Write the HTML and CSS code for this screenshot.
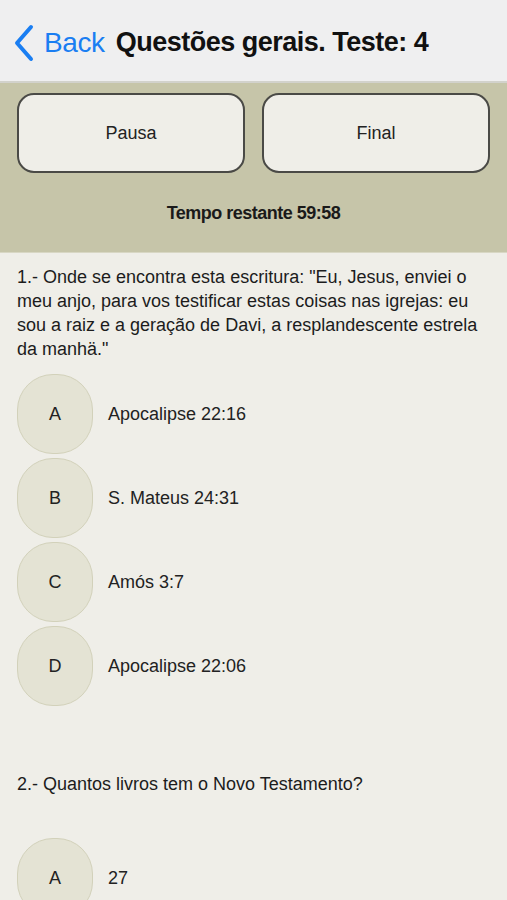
FILE: index.html
```html
<html>
<head>
  <title>Questões gerais</title>
  <meta charset="utf-8">
  <link rel="stylesheet" href="styles.css">
</head>
<body>
  <header class="navbar">
    <a class="back" href="#">
      <svg class="chevron" width="22" height="38" viewBox="0 0 22 38"><path d="M18 3 L4 19 L18 35" fill="none" stroke="#1a7ef2" stroke-width="4" stroke-linecap="round" stroke-linejoin="round"/></svg>
      <span>Back</span>
    </a>
    <h1 class="title">Questões gerais. Teste: 4</h1>
  </header>

  <section class="toolbar">
    <div class="actions">
      <button class="action">Pausa</button>
      <button class="action">Final</button>
    </div>
    <p class="timer">Tempo restante 59:58</p>
  </section>

  <section class="quiz">
    <div class="question">
      <p class="ask">1.- Onde se encontra esta escritura: "Eu, Jesus, enviei o meu anjo, para vos testificar estas coisas nas igrejas: eu sou a raiz e a geração de Davi, a resplandescente estrela da manhä."</p>
      <ul class="options">
        <li><span class="letter">A</span><span class="answer">Apocalipse 22:16</span></li>
        <li><span class="letter">B</span><span class="answer">S. Mateus 24:31</span></li>
        <li><span class="letter">C</span><span class="answer">Amós 3:7</span></li>
        <li><span class="letter">D</span><span class="answer">Apocalipse 22:06</span></li>
      </ul>
    </div>
    <div class="question second">
      <p class="ask">2.- Quantos livros tem o Novo Testamento?</p>
      <ul class="options">
        <li><span class="letter">A</span><span class="answer">27</span></li>
      </ul>
    </div>
  </section>
</body>
</html>
```

FILE: styles.css
```css
body {
  margin: 0;
  background: #efeee8;
  font-family: "Liberation Sans", Arial, sans-serif;
  color: #1c1c1c;
  overflow: hidden;
}
.navbar {
  height: 83px;
  display: flex;
  align-items: center;
  padding: 4px 0 0 13px;
  box-sizing: border-box;
  background: #efeff0;
  border-bottom: 2px solid #d2d2cc;
}
.back {
  display: flex;
  align-items: center;
  color: #1a7ef2;
  text-decoration: none;
  font-size: 28px;
  letter-spacing: -0.4px;
  margin-right: 11px;
}
.chevron {
  margin-right: 9px;
  margin-top: 1px;
}
.title {
  margin: 0;
  font-size: 27px;
  font-weight: bold;
  letter-spacing: -0.5px;
  color: #111;
}
.toolbar {
  background: #c6c5a9;
  padding: 10px 17px 0;
  height: 170px;
  box-sizing: border-box;
  border-bottom: 1px solid #d8d7c4;
}
.actions {
  display: grid;
  grid-template-columns: 1fr 1fr;
  gap: 17px;
}
.action {
  height: 80px;
  background: #efeee8;
  border: 2px solid #4a4a46;
  border-radius: 17px;
  font-family: "Liberation Sans", Arial, sans-serif;
  font-size: 18px;
  color: #222;
}
.timer {
  margin: 0;
  text-align: center;
  line-height: 80px;
  font-size: 18px;
  font-weight: bold;
  letter-spacing: -0.5px;
  color: #1a1a1a;
}
.quiz {
  padding: 0 17px;
}
.question {
  padding-top: 12px;
}
.ask {
  margin: 0;
  font-size: 18px;
  line-height: 24px;
  color: #1c1c1c;
}
.options {
  list-style: none;
  margin: 13px 0 0;
  padding: 0;
}
.options li {
  display: flex;
  align-items: center;
  margin-bottom: 4px;
}
.letter {
  width: 76px;
  height: 80px;
  box-sizing: border-box;
  display: flex;
  align-items: center;
  justify-content: center;
  background: #e4e3d4;
  border: 1px solid #d2d1ba;
  border-radius: 36px;
  font-size: 18px;
  color: #222;
  margin-right: 15px;
}
.answer {
  font-size: 18px;
  color: #222;
}
.second {
  padding-top: 62px;
}
.second .options {
  margin-top: 42px;
}
```
